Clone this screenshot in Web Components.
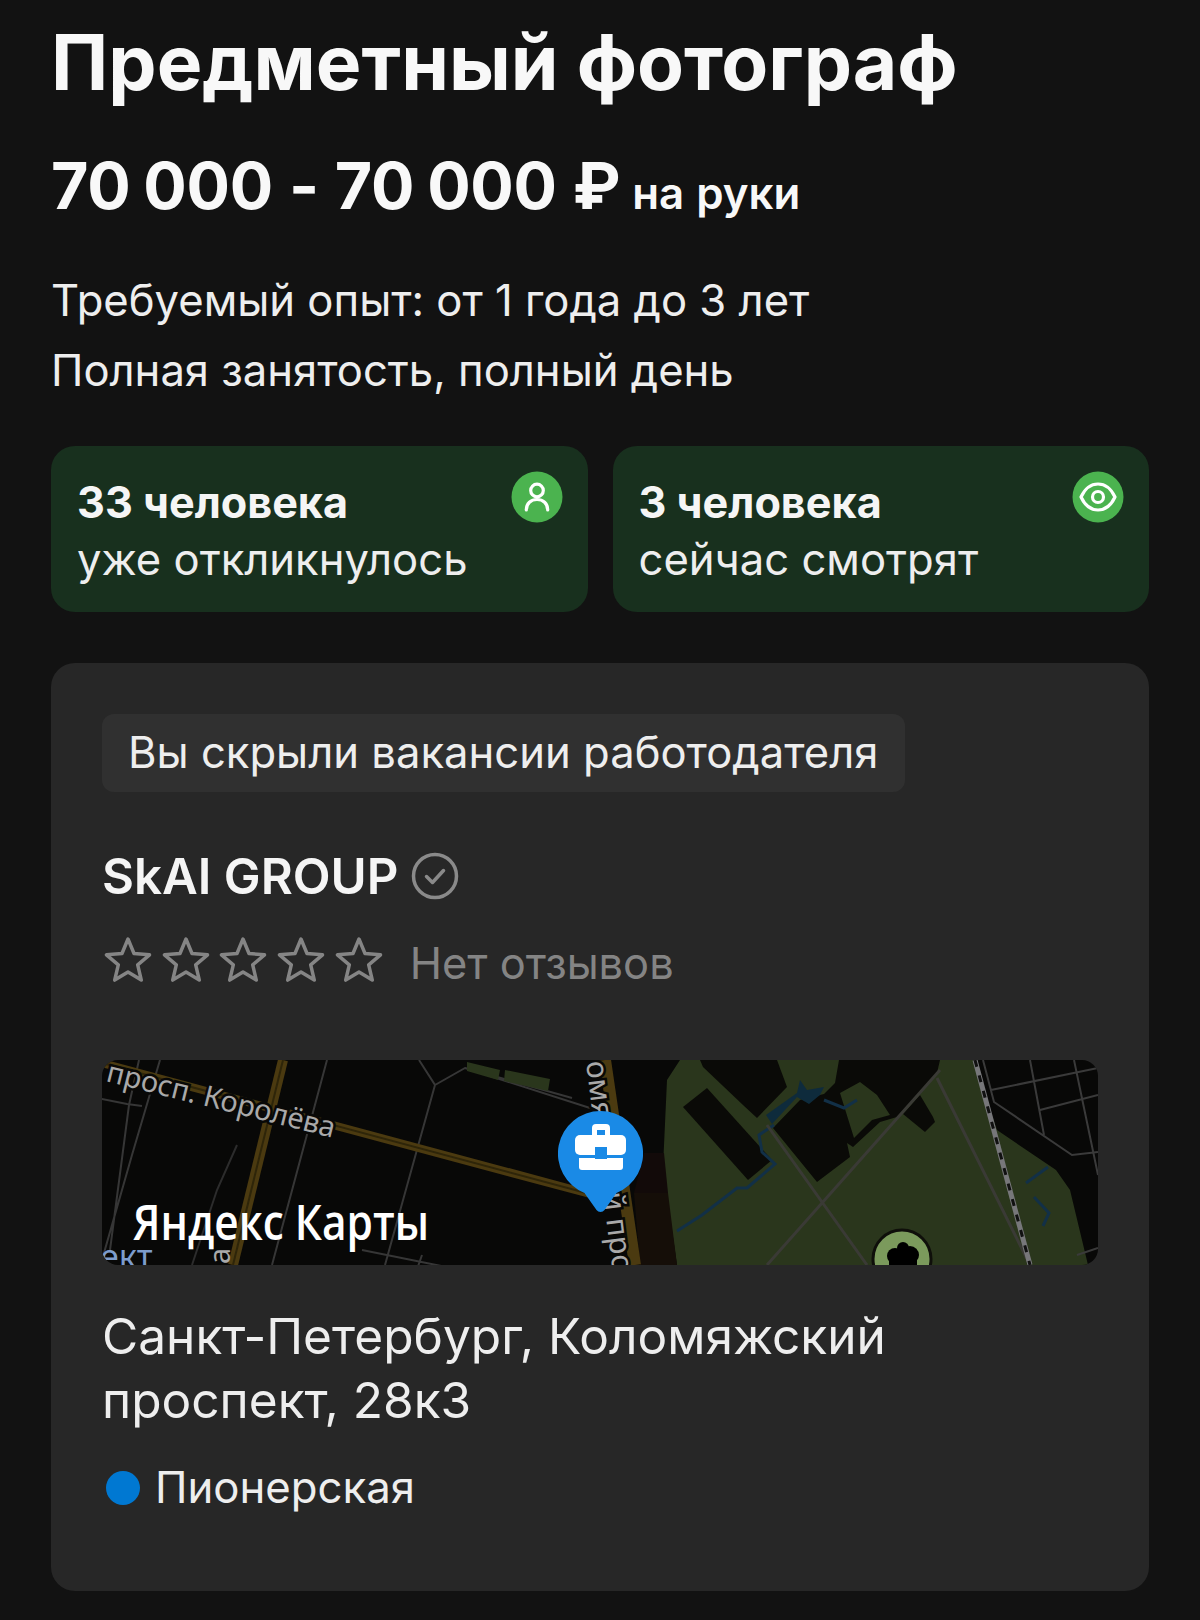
<!DOCTYPE html>
<html lang="ru">
<head>
<meta charset="utf-8">
<title>Вакансия</title>
<style>
  html, body { margin: 0; background: #121212; }
  body { font-family: Inter, "Liberation Sans", sans-serif; color: #f5f5f5; }
</style>
</head>
<body>
<vacancy-page>
  <vacancy-head title-text="Предметный фотограф" salary="70 000 - 70 000 ₽" note="на руки">
    <div>Требуемый опыт: от 1 года до 3 лет</div>
    <div>Полная занятость, полный день</div>
  </vacancy-head>
  <stat-row>
    <stat-card count="33 человека" icon="person">уже откликнулось</stat-card>
    <stat-card count="3 человека" icon="eye">сейчас смотрят</stat-card>
  </stat-row>
  <company-card>
    <hidden-tag>Вы скрыли вакансии работодателя</hidden-tag>
    <company-name>SkAI GROUP</company-name>
    <star-rating>Нет отзывов</star-rating>
    <map-view></map-view>
    <address-block metro="Пионерская">Санкт-Петербург, Коломяжский проспект, 28к3</address-block>
  </company-card>
</vacancy-page>

<script>
"use strict";
function shadow(el, html) {
  const template = document.createElement("template");
  template.innerHTML = html;
  el.attachShadow({ mode: "open" });
  el.shadowRoot.appendChild(template.content.cloneNode(true));
}

class VacancyPage extends HTMLElement {
  constructor() {
    super();
    shadow(this, `
      <style>
      :host { display: block; width: 1200px; height: 1620px; overflow: hidden; box-sizing: border-box; padding: 0 51px; background: #121212; }
      </style>
      <slot></slot>`);
  }
}

class VacancyHead extends HTMLElement {
  connectedCallback() {
    const salary = this.getAttribute("salary").replace(/\d+ \d+/g, m => `<span class="group">${m}</span>`);
    shadow(this, `
      <style>
      :host { display: block; }
      h1 { margin: 0; padding-top: 18px; font-size: 76.700px; line-height: 88px; font-weight: 700; color: #f8f8f8; }
      .salary { margin-top: 44px; font-size: 64.500px; line-height: 72px; font-weight: 700; color: #f8f8f8; letter-spacing: -0.300px; word-spacing: 1px; }
      .group { word-spacing: -2px; }
      .note { font-size: 43.800px; font-weight: 600; margin-left: -4px; letter-spacing: 0; }
      .info { margin-top: 36px; font-size: 43.600px; line-height: 70px; color: #eeeeee; }
      </style>
      <h1>${this.getAttribute("title-text")}</h1>
      <div class="salary">${salary} <span class="note">${this.getAttribute("note")}</span></div>
      <div class="info"><slot></slot></div>`);
  }
}

class StatRow extends HTMLElement {
  constructor() {
    super();
    shadow(this, `
      <style>
      :host { display: grid; grid-template-columns: 1fr 1fr; gap: 25px; margin-top: 40px; }
      </style>
      <slot></slot>`);
  }
}

const BADGES = {
  person: `<circle cx="26" cy="19.500" r="6.300"/><path d="M15.300 39c0-6.800 4.700-10.500 10.700-10.500S36.700 32.200 36.700 39"/>`,
  eye: `<path d="M9 26C13 17.500 19 13 26 13S39 17.500 43 26C39 34.500 33 39 26 39S13 34.500 9 26Z"/><circle cx="26" cy="26" r="5.500"/>`
};

class StatCard extends HTMLElement {
  connectedCallback() {
    shadow(this, `
      <style>
      :host { display: flex; justify-content: space-between; box-sizing: border-box; height: 166px; padding: 27px 25px 0 26px; background: #18301e; border-radius: 24px; }
      .count { font-size: 43.200px; line-height: 58px; font-weight: 700; color: #f5f5f5; }
      .text { font-size: 43.600px; line-height: 58px; color: #eeeeee; }
      svg { width: 52px; height: 52px; flex: none; margin-top: -2px; }
      </style>
      <div>
        <div class="count">${this.getAttribute("count")}</div>
        <div class="text"><slot></slot></div>
      </div>
      <svg viewBox="0 0 52 52" fill="none" stroke="#fff" stroke-width="3.200" stroke-linecap="round" stroke-linejoin="round">
        <circle cx="26" cy="26" r="25.500" fill="#4bb34f" stroke="none"/>
        ${BADGES[this.getAttribute("icon")]}
      </svg>`);
  }
}

class CompanyCard extends HTMLElement {
  constructor() {
    super();
    shadow(this, `
      <style>
      :host { display: block; box-sizing: border-box; height: 928px; margin-top: 51px; padding: 51px; background: #272727; border-radius: 24px; }
      </style>
      <slot></slot>`);
  }
}

class HiddenTag extends HTMLElement {
  constructor() {
    super();
    shadow(this, `
      <style>
      :host { display: table; box-sizing: border-box; height: 78px; padding: 0 27px 0 26px; background: #303030; border-radius: 12px; font-size: 43.600px; line-height: 78px; color: #eeeeee; }
      </style>
      <slot></slot>`);
  }
}

class CompanyName extends HTMLElement {
  constructor() {
    super();
    shadow(this, `
      <style>
      :host { display: flex; align-items: center; gap: 14px; margin-top: 55px; height: 58px; font-size: 49.200px; font-weight: 600; color: #f5f5f5; }
      svg { width: 48px; height: 48px; margin-left: -1px; }
      </style>
      <slot></slot>
      <svg viewBox="0 0 48 48" fill="none" stroke="#8a8a8a" stroke-width="3.500" stroke-linecap="round" stroke-linejoin="round">
        <circle cx="24" cy="24" r="21.500"/>
        <path d="M15.500 24.500l6 6 11-12"/>
      </svg>`);
  }
}

class StarRating extends HTMLElement {
  constructor() {
    super();
    const star = `<svg viewBox="0 0 48 46" fill="none" stroke="#858585" stroke-width="3.500" stroke-linejoin="round"><path d="M24 3l6 14.500 15.500 1.300-11.800 10.100 3.600 15.200L24 36l-13.300 8.100 3.600-15.200L2.500 18.800 18 17.500Z"/></svg>`;
    shadow(this, `
      <style>
      :host { display: flex; align-items: center; margin-top: 29px; height: 58px; font-size: 43.400px; color: #848484; }
      .stars { display: flex; gap: 9.700px; margin: 0 27px 8px 2px; }
      svg { width: 48px; height: 46px; display: block; }
      </style>
      <div class="stars">${star.repeat(5)}</div>
      <slot></slot>`);
  }
}

class MapView extends HTMLElement {
  constructor() {
    super();
    shadow(this, `
      <style>
      :host { display: block; position: relative; width: 996px; height: 205px; margin-top: 68px; border-radius: 16px; overflow: hidden; background: #080807; }
      svg { display: block; }
      text { font-family: "Noto Sans", "DejaVu Sans", sans-serif; }
      .brand { font-family: "Open Sans", "Noto Sans", sans-serif; }
      .pin { position: absolute; left: 456px; top: 51px; width: 85px; height: 102px; }
      </style>
      <svg width="996" height="205" viewBox="0 0 996 205" fill="none">
        <!-- парк -->
        <path d="M578 0H871L895 70 954 110 968 130 986 205H575L561 107 565 20Z" fill="#2a361c"/>
        <path d="M542 93H562L566 133H532Z" fill="#120a09"/>
        <path d="M532 133H566L575 205H538Z" fill="#150e08"/>
        <path d="M605 28 670 100 646 120 581 47Z" fill="#0a0a07"/>
        <path d="M598 0H675L685 27 655 58 641 45 601 7Z" fill="#0a0a07"/>
        <path d="M737 0H838L835 13 795 57 778 62 751 87 745 83 748 97 715 122 671 68 698 40 722 34 733 23Z" fill="#0a0a07"/>
        <path d="M738 33 758 22 775 35 788 55 770 60 752 78Z" fill="#2a361c"/>
        <path d="M818 35 831 57 833 62 823 72 801 54Z" fill="#0a0a07"/>
        <path d="M664 55 695 33 698 20 705 30 722 27 718 35 707 44 695 37 670 64Z" fill="#0e2b3c"/>
        <path d="M722 40 742 48 755 40" stroke="#123047" stroke-width="3"/>
        <path d="M672 65 657 75 660 92 673 104 645 128 635 128 600 155 575 171" stroke="#123047" stroke-width="3"/>
        <path d="M924 123 946 107M932 137 947 153 941 166" stroke="#123047" stroke-width="3"/>
        <!-- дорожки в парке -->
        <path d="M665 65 765 205M835 18 928 205M838 10 665 205" stroke="#3a3a35" stroke-width="3"/>
        <path d="M873 0 928 205" stroke="#77777a" stroke-width="5"/>
        <path d="M873 0 928 205" stroke="#111" stroke-width="3" stroke-dasharray="7 9"/>
        <!-- город справа -->
        <path d="M881 0 892 42 970 95 996 92M889 30 996 8M928 0 942 75M972 0 996 115M938 50 996 35M975 195 996 188" stroke="#3a3a3a" stroke-width="2"/>
        <!-- улицы слева -->
        <path d="M37 0 27 45 8 190M58 0 30 95 0 200M225 0 170 205M317 0 333 25 283 205M333 25 363 8 488 48M363 8 470 38M260 190 384 215M320 195 313 215" stroke="#363636" stroke-width="2"/>
        <path d="M-5 38 25 44 40 46" stroke="#363636" stroke-width="2"/>
        <path d="M135 85 115 130 90 205" stroke="#2c2c2c" stroke-width="2"/>
        <path d="M365 2 398 10 396 20 365 11ZM403 10 448 19 446 31 402 21Z" fill="#2a361c"/>
        <path d="M0 3 488 134" stroke="#4b3a10" stroke-width="8"/>
        <path d="M0 3 488 134" stroke="#2e2509" stroke-width="2"/>
        <path d="M181 0 131 205" stroke="#4b3a10" stroke-width="10"/>
        <path d="M181 0 131 205" stroke="#2e2509" stroke-width="2"/>
        <path d="M503 0 533 205" stroke="#4b3a10" stroke-width="12"/>
        <!-- подписи -->
        <text transform="translate(3 21) rotate(14)" font-size="29" fill="#a9a9a9" stroke="#080807" stroke-width="5" paint-order="stroke">просп. Королёва</text>
        <text transform="translate(484 2) rotate(83)" font-size="30" fill="#a9a9a9" stroke="#080807" stroke-width="5" paint-order="stroke">омя</text>
        <text transform="translate(501 133) rotate(83)" font-size="30" fill="#a9a9a9" stroke="#080807" stroke-width="5" paint-order="stroke">й про</text>
        <text x="-2" y="209" font-size="34" fill="#7d9ccc">ект</text>
        <text transform="translate(128 204) rotate(-90)" font-size="29" fill="#a9a9a9">а</text>
        <circle cx="800" cy="199" r="29" fill="#7b9a5c" stroke="#0f0f0a" stroke-width="3"/>
        <g fill="#000"><circle cx="793" cy="196" r="8"/><circle cx="808" cy="195" r="9"/><circle cx="801" cy="188" r="6"/><rect x="787" y="196" width="28" height="12"/></g>
        <text class="brand" x="31" y="180" font-size="49" font-weight="600" fill="#fff" textLength="296" lengthAdjust="spacingAndGlyphs">Яндекс Карты</text>
      </svg>
      <svg class="pin" viewBox="0 0 85 102">
        <path d="M42.500 0a42.500 42.500 0 0 1 16 81.900L46.500 99a5 5 0 0 1-8 0L26.500 81.900A42.500 42.500 0 0 1 42.500 0Z" fill="#1a8ae6"/>
        <path d="M34 25V17a4 4 0 0 1 4-4h10a4 4 0 0 1 4 4v8h-5v-6H39v6Z" fill="#fff"/>
        <rect x="17" y="24" width="51" height="20" rx="5" fill="#fff"/>
        <rect x="21" y="47" width="44" height="12" rx="3" fill="#fff"/>
        <rect x="21" y="44" width="44" height="6" fill="#fff"/>
        <rect x="17" y="44" width="51" height="3" fill="#1a8ae6"/>
        <rect x="37" y="36" width="12" height="12" fill="#1a8ae6"/>
      </svg>`);
  }
}

class AddressBlock extends HTMLElement {
  connectedCallback() {
    shadow(this, `
      <style>
      :host { display: block; margin-top: 39px; font-size: 49.600px; line-height: 64px; color: #eeeeee; }
      .addr { width: 820px; }
      .metro { display: flex; align-items: center; gap: 15px; margin-top: 27px; font-size: 43.700px; line-height: 58px; }
      .metro i { width: 34px; height: 34px; border-radius: 50%; background: #0078d2; margin-left: 4px; }
      </style>
      <div class="addr"><slot></slot></div>
      <div class="metro"><i></i>${this.getAttribute("metro")}</div>`);
  }
}

window.customElements.define("vacancy-page", VacancyPage);
window.customElements.define("vacancy-head", VacancyHead);
window.customElements.define("stat-row", StatRow);
window.customElements.define("stat-card", StatCard);
window.customElements.define("company-card", CompanyCard);
window.customElements.define("hidden-tag", HiddenTag);
window.customElements.define("company-name", CompanyName);
window.customElements.define("star-rating", StarRating);
window.customElements.define("map-view", MapView);
window.customElements.define("address-block", AddressBlock);
</script>
</body>
</html>
